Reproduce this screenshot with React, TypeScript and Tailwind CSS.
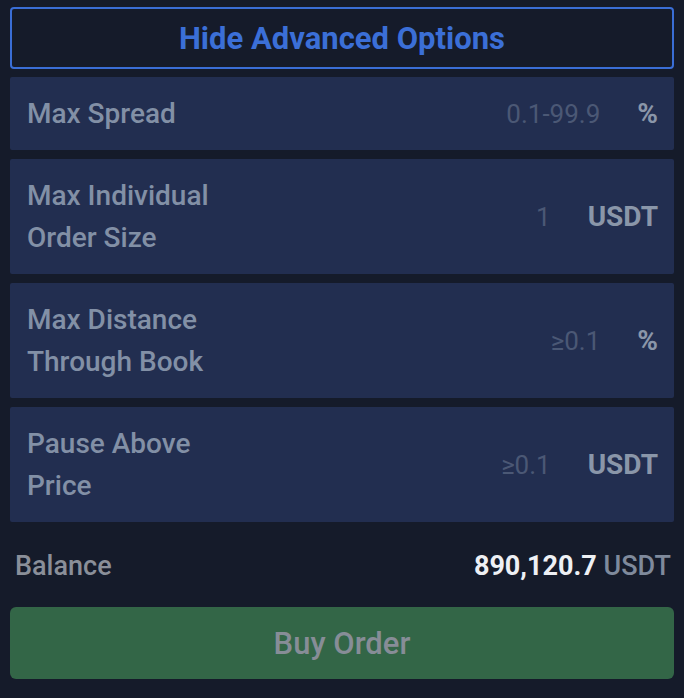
import React from 'react';

type Campo = {
  etiqueta: string;
  marcador: string;
  unidad: string;
};

const campos: Campo[] = [
  { etiqueta: 'Max Spread', marcador: '0.1-99.9', unidad: '%' },
  { etiqueta: 'Max Individual Order Size', marcador: '1', unidad: 'USDT' },
  { etiqueta: 'Max Distance Through Book', marcador: '≥0.1', unidad: '%' },
  { etiqueta: 'Pause Above Price', marcador: '≥0.1', unidad: 'USDT' },
];

function FilaCampo({ etiqueta, marcador, unidad }: Campo) {
  return (
    <div className="flex items-center rounded-[2px] bg-[#222e50] py-[15.5px] pl-[17px] pr-[16px]">
      <span className="w-[230px] shrink-0 text-[28px] font-medium leading-[42px] text-[#8290a6]">{etiqueta}</span>
      <input
        placeholder={marcador}
        className="min-w-0 flex-1 bg-transparent text-right text-[26px] leading-[42px] text-[#8290a6] outline-none placeholder:text-[#4b5875]"
      />
      <span className="ml-[37px] text-[28px] font-bold leading-[42px] text-[#8a96a9]">{unidad}</span>
    </div>
  );
}

export default function App() {
  return (
    <div
      className="h-[698px] w-[684px] bg-[#151b2a] px-[10px] pt-[7px]"
      style={{ fontFamily: 'Roboto, "Liberation Sans", sans-serif' }}
    >
      <button className="flex h-[62px] w-full items-center justify-center rounded-[4px] border-2 border-[#3a6ed6] pt-[2px] text-[31px] font-bold text-[#3b6fd7]">
        Hide Advanced Options
      </button>
      <div className="mt-[8px] flex flex-col gap-[9px]">
        {campos.map((c) => (
          <FilaCampo key={c.etiqueta} {...c} />
        ))}
      </div>
      <div className="mt-[23px] flex items-center justify-between pl-[5px] pr-[3px] text-[27px] font-medium leading-[42px]">
        <span className="text-[#8a8f99]">Balance</span>
        <span>
          <span className="font-bold text-[#eef0f4]">890,120.7</span>{' '}
          <span className="text-[#7f8a9c]">USDT</span>
        </span>
      </div>
      <button className="mt-[20px] flex h-[72px] w-full items-center justify-center rounded-[6px] bg-[#336647] pt-[3px] text-[31px] font-medium text-[#878d97]">
        Buy Order
      </button>
    </div>
  );
}
